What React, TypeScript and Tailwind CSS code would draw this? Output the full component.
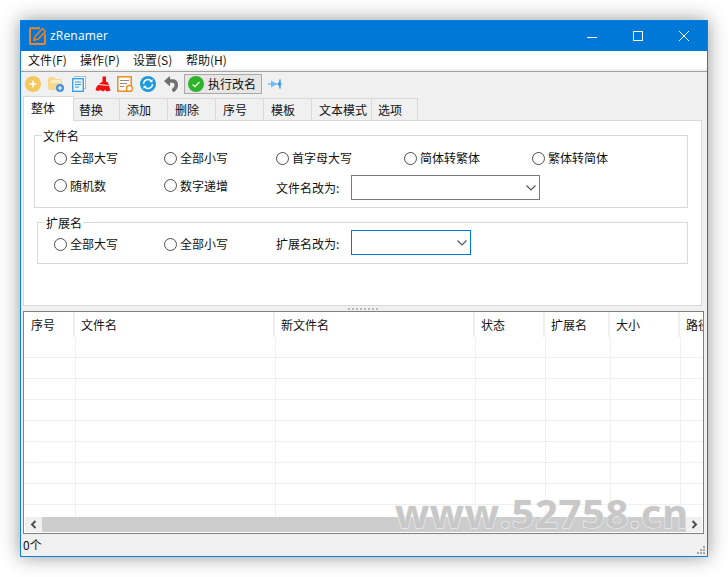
import React from "react";

const Radio = ({ label, w }: { label: string; w: string }) => (
  <div className={`flex items-center ${w}`}>
    <span className="w-[13px] h-[13px] rounded-full border border-[#505050] bg-white shrink-0" />
    <span className="ml-[3px] whitespace-nowrap">{label}</span>
  </div>
);

const Chevron = () => (
  <svg width="10" height="6" viewBox="0 0 10 6" className="shrink-0">
    <path d="M0.5 0.5 L5 5 L9.5 0.5" fill="none" stroke="#555" strokeWidth="1.1" />
  </svg>
);

const tabs: [string, string][] = [
  ["替换", "w-[46px] pl-[5px]"],
  ["添加", "w-[48px] pl-[7px]"],
  ["删除", "w-[48px] pl-[7px]"],
  ["序号", "w-[48px] pl-[7px]"],
  ["模板", "w-[48px] pl-[7px]"],
  ["文本模式", "w-[60px] pl-[7px]"],
  ["选项", "w-[46px] pl-[6px]"],
];

const cols: [string, string][] = [
  ["序号", "w-[51px] pl-[7px]"],
  ["文件名", "w-[200px] pl-[6px]"],
  ["新文件名", "w-[200px] pl-[6px]"],
  ["状态", "w-[70px] pl-[6px]"],
  ["扩展名", "w-[65px] pl-[6px]"],
  ["大小", "w-[70px] pl-[6px]"],
  ["路径", "w-[70px] pl-[6px]"],
];

const bodyCols = ["w-[52px]", "w-[200px]", "w-[200px]", "w-[70px]", "w-[65px]", "w-[70px]", "w-[70px]"];

export default function App() {
  return (
    <div className="w-[728px] h-[577px] bg-white pl-[20px] pt-[20px] overflow-hidden relative font-['Noto_Sans_CJK_SC','Noto_Sans',sans-serif] text-[12px] text-[#111]">
      <div className="w-[688px] h-[537px] border border-[#0a7fe0] bg-[#f0f0f0] flex flex-col shadow-[0_0_18px_rgba(0,0,0,0.42)]">
        {/* title bar */}
        <div className="h-[30px] bg-[#0078d7] flex items-center shrink-0 pl-[8px] text-white">
          <svg width="18" height="18" viewBox="0 0 18 18" className="shrink-0">
            <path d="M11 1.2 H2 Q1 1.2 1 2.2 V16 Q1 17 2 17 H15 Q16 17 16 16 V7" fill="none" stroke="#f58220" strokeWidth="2" />
            <path d="M5 13.2 L6 9.5 L13.5 1.5 L16.5 4.5 L9 12.2 Z" fill="#0078d7" stroke="#f58220" strokeWidth="1.4" />
          </svg>
          <span className="ml-[3px] font-['Open_Sans'] text-[12px] tracking-[0.2px]">zRenamer</span>
          <div className="ml-auto flex items-center">
            <svg width="12" height="12" viewBox="0 0 12 12" className="mr-[34px] mt-[1px]"><path d="M1 6.5 H11" stroke="#fff" strokeWidth="1" /></svg>
            <svg width="12" height="12" viewBox="0 0 12 12" className="mr-[34px]"><rect x="1.5" y="1.5" width="9" height="9" fill="none" stroke="#fff" strokeWidth="1" /></svg>
            <svg width="12" height="12" viewBox="0 0 12 12" className="mr-[17px]"><path d="M1 1 L11 11 M11 1 L1 11" stroke="#fff" strokeWidth="1" /></svg>
          </div>
        </div>
        {/* menu */}
        <div className="h-[18px] bg-white flex items-center shrink-0 pl-[7px] leading-none">
          <span className="w-[52px]">文件(F)</span>
          <span className="w-[53px]">操作(P)</span>
          <span className="w-[53px]">设置(S)</span>
          <span>帮助(H)</span>
        </div>
        <div className="h-[3px] shrink-0 border-b border-[#a0a0a0]" />
        {/* toolbar */}
        <div className="h-[26px] shrink-0 flex items-center pl-[4px] pb-[2px]">
          <svg width="16" height="16" viewBox="0 0 16 16" className="mr-[7px]">
            <circle cx="8" cy="8" r="8" fill="#f3c95c" />
            <path d="M8 4.5 V11.5 M4.5 8 H11.5" stroke="#fff" strokeWidth="1.6" />
          </svg>
          <svg width="16" height="16" viewBox="0 0 16 16" className="mr-[8px]">
            <path d="M0 3 Q0 1 2 1 H6 L8 3 H12 Q14 3 14 5 V14 H2 Q0 14 0 12 Z" fill="#f7d890" />
            <rect x="3" y="4" width="10" height="3" fill="#fbeac0" />
            <circle cx="12" cy="12" r="4" fill="#4a90d9" />
            <path d="M12 10 V14 M10 12 H14" stroke="#fff" strokeWidth="1.2" />
          </svg>
          <svg width="14" height="16" viewBox="0 0 14 16" className="mr-[9px]">
            <rect x="3" y="0.5" width="10.5" height="12" fill="#fff" stroke="#8fc5ec" />
            <rect x="0.7" y="2.7" width="10.6" height="12.6" fill="#e8f3fb" stroke="#3a9ad9" strokeWidth="1.3" />
            <path d="M3 6 H9 M3 8.5 H9 M3 11 H7" stroke="#3a9ad9" strokeWidth="1" />
          </svg>
          <svg width="16" height="16" viewBox="0 0 16 16" className="mr-[6px]">
            <path d="M7.5 0.5 H11 L11 5.5 L13 6.5 L15.5 14.5 L12 15.5 L10 14 L8 15.5 L5.5 14 L3 15 L0.5 14 Q1.5 10 4 8 L7.5 5.5 Z" fill="#f01010" />
            <path d="M3.5 8.5 L13.5 9.5" stroke="#fff" strokeWidth="0.9" />
          </svg>
          <svg width="16" height="16" viewBox="0 0 16 16" className="mr-[7px]">
            <rect x="0.8" y="0.8" width="13.4" height="14.4" fill="#fffdf8" stroke="#f08a24" strokeWidth="1.5" />
            <path d="M3 4.5 H12 M3 7.5 H10 M3 10.5 H7" stroke="#8a8a8a" strokeWidth="1" />
            <circle cx="12.5" cy="12.5" r="3" fill="#fff" stroke="#f08a24" strokeWidth="1.4" />
          </svg>
          <svg width="16" height="16" viewBox="0 0 16 16" className="mr-[8px]">
            <circle cx="8" cy="8" r="8" fill="#1c9ae0" />
            <path d="M3.5 8 A4.5 4.5 0 0 1 11.5 5.2 M12.5 8 A4.5 4.5 0 0 1 4.5 10.8" fill="none" stroke="#fff" strokeWidth="1.4" />
            <path d="M12.5 3 V6.3 H9.3 Z M3.5 13 V9.7 H6.7 Z" fill="#fff" />
          </svg>
          <svg width="14" height="16" viewBox="0 0 14 16" className="mr-[6px]">
            <path d="M3.5 5 H8.5 Q12.3 5 12.3 9 Q12.3 12.5 8.5 15" fill="none" stroke="#6f6f6f" strokeWidth="3.4" />
            <path d="M6 0 L0 5 L6 10.5 Z" fill="#6f6f6f" />
          </svg>
          <div className="w-[78px] h-[20px] bg-[#e6e6e6] border border-[#a9a9a9] flex items-center pl-[3px] mr-[6px]">
            <svg width="16" height="16" viewBox="0 0 16 16" className="shrink-0">
              <circle cx="8" cy="8" r="8" fill="#2fb32a" />
              <path d="M4.5 8.5 L7 10.5 L11.5 6" fill="none" stroke="#e8f8e0" strokeWidth="1.4" />
            </svg>
            <span className="ml-[4px] whitespace-nowrap">执行改名</span>
          </div>
          <svg width="14" height="10" viewBox="0 0 14 10">
            <path d="M0 5 H14" stroke="#5cb2f0" strokeWidth="1.2" />
            <path d="M3 1.5 L9 5 L3 8.5 Z" fill="#6bbcf4" />
            <path d="M9.5 5 L12 1.5 V8.5 Z" fill="#3a9ff0" />
            <path d="M12 0.5 V9.5" stroke="#2f9be8" strokeWidth="1.4" />
          </svg>
        </div>
        {/* tabs */}
        <div className="h-[22px] shrink-0 flex items-end pl-[2px] relative z-10">
          <div className="w-[51px] h-[25px] bg-white border border-b-0 border-[#d9d9d9] pl-[7px] pb-[2px] -mb-px flex items-center">整体</div>
          {tabs.map(([t, w]) => (
            <div key={t} className={`${w} h-[22px] border-t border-r border-[#d9d9d9] flex items-center whitespace-nowrap`}>
              {t}
            </div>
          ))}
        </div>
        {/* panel */}
        <div className="ml-[2px] w-[679px] h-[186px] shrink-0 bg-white border border-[#d9d9d9] pt-[14px] pl-[10px]">
          <div className="relative w-[654px] h-[73px] border border-[#d9d9d9] pl-[19px] pt-[12px]">
            <span className="absolute left-[7px] -top-[8px] bg-white px-[1px] leading-[16px]">文件名</span>
            <div className="flex items-center h-[20px]">
              <Radio label="全部大写" w="w-[110px]" />
              <Radio label="全部小写" w="w-[112px]" />
              <Radio label="首字母大写" w="w-[128px]" />
              <Radio label="简体转繁体" w="w-[128px]" />
              <Radio label="繁体转简体" w="w-[100px]" />
            </div>
            <div className="flex items-center h-[25px] mt-[7px]">
              <Radio label="随机数" w="w-[110px] -mt-[4px]" />
              <Radio label="数字递增" w="w-[112px] -mt-[4px]" />
              <span className="w-[75px] whitespace-nowrap">文件名改为:</span>
              <div className="w-[189px] h-[25px] border border-[#7a7a7a] bg-white flex items-center justify-end pr-[3px]">
                <Chevron />
              </div>
            </div>
          </div>
          <div className="relative w-[651px] h-[42px] border border-[#d9d9d9] ml-[3px] mt-[14px] pl-[16px] pt-[7px]">
            <span className="absolute left-[7px] -top-[8px] bg-white px-[1px] leading-[16px]">扩展名</span>
            <div className="flex items-center h-[25px]">
              <Radio label="全部大写" w="w-[110px] mt-[3px]" />
              <Radio label="全部小写" w="w-[112px] mt-[3px]" />
              <span className="w-[75px] whitespace-nowrap mt-[3px]">扩展名改为:</span>
              <div className="w-[120px] h-[25px] border border-[#0078d7] bg-white flex items-center justify-end pr-[3px]">
                <Chevron />
              </div>
            </div>
          </div>
        </div>
        {/* splitter */}
        <div className="h-[5px] shrink-0 flex items-center justify-center pr-[2px]">
          <div className="w-[30px] h-[2px] bg-[repeating-linear-gradient(90deg,#b8b8b8_0_2px,transparent_2px_4px)]" />
        </div>
        {/* table */}
        <div className="ml-[2px] w-[681px] h-[223px] shrink-0 bg-white border border-[#808080] flex flex-col overflow-hidden">
          <div className="h-[25px] shrink-0 flex overflow-hidden">
            {cols.map(([t, w]) => (
              <div key={t} className={`${w} shrink-0 h-[25px] border-r-2 border-[#f0f0f0] flex items-center whitespace-nowrap`}>
                {t}
              </div>
            ))}
          </div>
          <div className="flex-1 overflow-hidden">
            {Array.from({ length: 9 }).map((_, i) => (
              <div key={i} className="h-[21px] flex border-b border-[#f0f0f0]">
                {bodyCols.map((w, j) => (
                  <div key={j} className={`${w} shrink-0 border-r border-[#f0f0f0]`} />
                ))}
              </div>
            ))}
          </div>
          <div className="h-[15px] shrink-0 flex bg-[#cdcdcd] mx-px mb-px">
            <div className="w-[17px] bg-[#f0f0f0] flex items-center justify-center">
              <svg width="7" height="9" viewBox="0 0 7 9"><path d="M5.5 1 L2 4.5 L5.5 8" fill="none" stroke="#505050" strokeWidth="2" /></svg>
            </div>
            <div className="flex-1" />
            <div className="w-[16px] bg-[#f0f0f0] flex items-center justify-center">
              <svg width="7" height="9" viewBox="0 0 7 9"><path d="M1.5 1 L5 4.5 L1.5 8" fill="none" stroke="#505050" strokeWidth="2" /></svg>
            </div>
          </div>
        </div>
        {/* status */}
        <div className="flex-1 relative flex items-center leading-none">
          <span className="ml-[2px]">0个</span>
          <svg width="9" height="9" viewBox="0 0 9 9" className="absolute right-[2px] bottom-[2px]">
            <path d="M7 1h2v2H7zM4 4h2v2H4zM7 4h2v2H7zM1 7h2v2H1zM4 7h2v2H4zM7 7h2v2H7z" fill="#a8a8a8" />
          </svg>
        </div>
      </div>
      {/* watermark */}
      <div className="absolute left-[395px] top-[489px] font-['Open_Sans'] font-bold text-[40px] leading-[48px] tracking-[0.6px] text-[#c8c8c8] whitespace-nowrap [-webkit-text-stroke:1px_#f6f6f6] [paint-order:stroke_fill]">
        www.52758.cn
      </div>
    </div>
  );
}
